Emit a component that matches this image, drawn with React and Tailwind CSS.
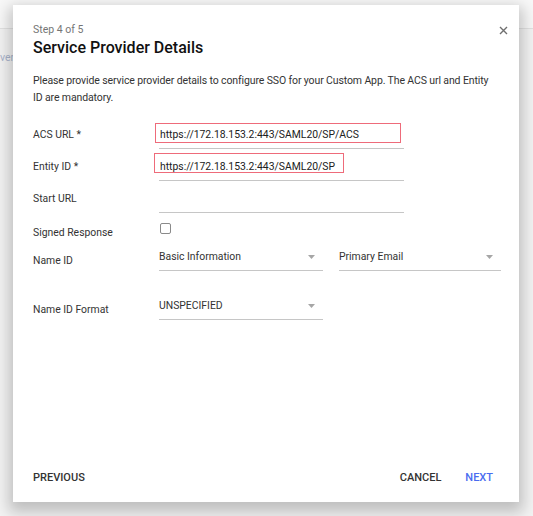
import React from 'react';

// --- Small pieces ---
const Arrow = () => (
  <svg width="7" height="4" viewBox="0 0 7 4" className="shrink-0">
    <path d="M0 0 L7 0 L3.5 4 Z" fill="#a6a6a6" />
  </svg>
);

const Label = ({ children, className = '' }) => (
  <div className={`w-[126px] shrink-0 flex items-center text-[10.4px] text-[#333333] ${className}`}>
    {children}
  </div>
);

const TextRow = ({ label, value, box }) => (
  <div className="flex h-[32px]">
    <Label className="pt-[4px]">{label}</Label>
    <div className="relative w-[245px] flex items-center border-b border-[#c6c6c6] pt-[5px] pl-[1px] text-[10.4px] text-[#212121]">
      {value}
      {box}
    </div>
  </div>
);

const Select = ({ value, width }) => (
  <div
    className="flex h-[24px] items-center justify-between border-b border-[#c6c6c6] pb-[3px] pr-[8px] text-[10.4px] text-[#333333]"
    style={{ width }}
  >
    <span>{value}</span>
    <Arrow />
  </div>
);

export default function App() {
  return (
    <div className="relative w-[533px] h-[516px] overflow-hidden bg-[#f3f3f3] font-['Roboto',sans-serif]">
      {/* page behind the dialog */}
      <div className="h-[29px] border-b border-[#e2e2e2] bg-[#f8f8f8]" />
      <div className="mt-[21px] text-[10.5px] text-[#a9b3cc]">ver</div>

      {/* dialog */}
      <div className="absolute left-[13px] top-[5px] w-[506px] h-[497px] bg-white flex flex-col shadow-[0_6px_14px_4px_rgba(0,0,0,0.22)]">
        <button className="absolute right-[11px] top-[21px] p-0">
          <svg width="9" height="9" viewBox="0 0 9 9">
            <path d="M1 1 L8 8 M8 1 L1 8" stroke="#6f6f6f" strokeWidth="1.4" />
          </svg>
        </button>

        <div className="px-5 pt-[18px]">
          <div className="text-[10.5px] leading-[14px] text-[#757575]">Step 4 of 5</div>
          <h2 className="mt-[1px] text-[16px] leading-[20px] font-medium text-[#111111]">
            Service Provider Details
          </h2>
          <p className="mt-[14px] whitespace-nowrap text-[10.5px] leading-[17px] tracking-[-0.12px] text-[#333333]">
            Please provide service provider details to configure SSO for your Custom App. The ACS url and Entity
            <br />
            ID are mandatory.
          </p>

          <div className="mt-[11px] flex flex-col">
            <TextRow
              label="ACS URL *"
              value="https://172.18.153.2:443/SAML20/SP/ACS"
              box={<div className="absolute left-[-4px] top-[6px] w-[246px] h-[20px] border border-[#ee6b7a]" />}
            />
            <TextRow
              label="Entity ID *"
              value="https://172.18.153.2:443/SAML20/SP"
              box={<div className="absolute left-[-5px] top-[4px] w-[190px] h-[20px] border border-[#ee6b7a]" />}
            />
            <TextRow label="Start URL" value="" />

            <div className="flex h-[34px]">
              <Label className="pt-[5px]">Signed Response</Label>
              <div className="ml-[1px] mt-[10px] w-[11px] h-[11px] rounded-[2px] border-[1.5px] border-[#8a8a8a]" />
            </div>

            <div className="flex h-[24px]">
              <Label className="pt-[4px]">Name ID</Label>
              <div className="flex gap-[16px]">
                <Select value="Basic Information" width="164px" />
                <Select value="Primary Email" width="162px" />
              </div>
            </div>

            <div className="mt-[25px] flex h-[24px]">
              <Label className="pt-[4px]">Name ID Format</Label>
              <Select value="UNSPECIFIED" width="164px" />
            </div>
          </div>
        </div>

        <div className="mt-auto flex h-[48px] items-center justify-between pl-5 pr-[26px] text-[11px] font-medium text-[#333333]">
          <button>PREVIOUS</button>
          <div className="flex gap-[24px]">
            <button>CANCEL</button>
            <button className="text-[#4a6cf0]">NEXT</button>
          </div>
        </div>
      </div>
    </div>
  );
}
